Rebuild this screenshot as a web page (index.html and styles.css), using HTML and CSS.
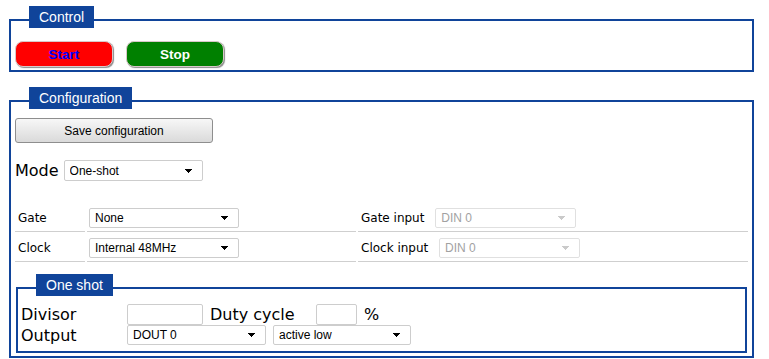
FILE: index.html
```html
<!DOCTYPE html>
<html lang="en">
<head>
  <meta charset="UTF-8">
  <title>Timer</title>
  <link rel="stylesheet" href="styles.css">
</head>
<body>

  <fieldset class="panel control">
    <legend>Control</legend>
    <div class="run-buttons">
      <button class="run start">Start</button>
      <button class="run stop">Stop</button>
    </div>
  </fieldset>

  <fieldset class="panel config">
    <legend>Configuration</legend>
    <button class="save">Save configuration</button>

    <div class="mode">
      <label for="mode">Mode</label>
      <select id="mode" class="mode-select">
        <option>One-shot</option>
      </select>
    </div>

    <table class="settings">
      <tr>
        <td class="lbl">Gate</td>
        <td class="mid"><select class="wide"><option>None</option></select></td>
        <td>Gate input <select class="input-select" disabled><option>DIN 0</option></select></td>
      </tr>
      <tr>
        <td class="lbl">Clock</td>
        <td class="mid"><select class="wide"><option>Internal 48MHz</option></select></td>
        <td>Clock input <select class="input-select" disabled><option>DIN 0</option></select></td>
      </tr>
    </table>

    <fieldset class="panel sub">
      <legend>One shot</legend>
      <div class="os-row">
        <span class="os-label">Divisor</span>
        <input type="text" class="divisor">
        <span class="duty-label">Duty cycle</span>
        <input type="text" class="duty">
        <span>%</span>
      </div>
      <div class="os-row">
        <span class="os-label">Output</span>
        <select class="out"><option>DOUT 0</option></select>
        <select class="level"><option>active low</option></select>
      </div>
    </fieldset>
  </fieldset>

</body>
</html>
```

FILE: styles.css
```css
body {
  margin: 6px 8px 0 8px;
  font-family: "DejaVu Sans", Verdana, sans-serif;
  font-size: 16px;
  color: #000;
  background: #fff;
}

.panel {
  box-sizing: border-box;
  width: 745px;
  min-width: 0;
  margin: 0 0 15px 1px;
  padding: 3px 4px 3px;
  border: 2px solid #10449a;
}

legend {
  margin-left: 14px;
  padding: 3px 10px;
  background: #10449a;
  background-clip: padding-box;
  border-bottom: 6px solid transparent;
  color: #fff;
  font: 14px/16px "Liberation Sans", Arial, sans-serif;
}

/* control */
.run-buttons {
  display: flex;
  gap: 13px;
  margin-top: 4px;
}

.run {
  width: 98px;
  height: 26px;
  border: 1px solid #d8c8c8;
  border-radius: 8px;
  box-shadow: 1px 1px 1px #8a8a8a;
  font: bold 13.5px "Liberation Sans", Arial, sans-serif;
  cursor: pointer;
}

.start {
  background: #ff0000;
  color: #0000ff;
}

.stop {
  background: #008000;
  color: #fff;
}

/* configuration */
.save {
  display: block;
  width: 198px;
  height: 25px;
  border: 1px solid #8e8e8e;
  border-radius: 3px;
  background: linear-gradient(#f7f7f7, #dadada);
  font: 12px "Liberation Sans", Arial, sans-serif;
  color: #000;
}

.mode {
  display: flex;
  align-items: center;
  gap: 5px;
  margin-top: 17px;
  height: 21px;
}

select {
  -webkit-appearance: none;
  appearance: none;
  box-sizing: border-box;
  height: 21px;
  padding: 0 0 0 5px;
  border: 1px solid #cdcdcd;
  border-radius: 2px;
  background-color: #fff;
  background-image:
    linear-gradient(45deg, transparent 50%, #000 50%),
    linear-gradient(135deg, #000 50%, transparent 50%);
  background-position: calc(100% - 13px) 50%, calc(100% - 9px) 50%;
  background-size: 4px 4px, 4px 4px;
  background-repeat: no-repeat;
  font: 12px "Liberation Sans", Arial, sans-serif;
  color: #000;
}

select:disabled {
  color: #7a7a7a;
  border-color: #d4d4d4;
  background-image:
    linear-gradient(45deg, transparent 50%, #b4b4b4 50%),
    linear-gradient(135deg, #b4b4b4 50%, transparent 50%);
}

.mode-select { width: 139px; }

.settings {
  width: calc(100% + 4px);
  margin: 21px -2px 0;
  border-spacing: 2px;
  font-size: 12px;
}

.settings td {
  padding: 4px 3px 3px;
  border-bottom: 1px solid #cfcfcf;
  white-space: nowrap;
}

.settings .lbl { width: 64px; }
.settings .mid { width: 264px; padding-left: 2px; }

.settings select { height: 20px; vertical-align: middle; }
.wide { width: 150px; }
.input-select { width: 141px; margin-left: 7px; }

/* one shot */
.sub {
  width: auto;
  margin: 10px 1px 0;
  padding: 2px 3px 6px;
}

.sub legend { margin-left: 15px; }

.os-row {
  display: flex;
  align-items: center;
  height: 21px;
}

.os-row + .os-row { height: 20px; }

.os-label { width: 106px; }

input {
  box-sizing: border-box;
  height: 21px;
  border: 1px solid #cdcdcd;
  border-radius: 2px;
  padding: 0 3px;
  font: 12px "Liberation Sans", Arial, sans-serif;
}

.divisor { width: 76px; margin-right: 7px; }
.duty-label { width: 106px; }
.duty { width: 41px; margin-right: 7px; }

.out { width: 139px; height: 20px; margin-right: 7px; }
.level { width: 138px; height: 20px; }
```
